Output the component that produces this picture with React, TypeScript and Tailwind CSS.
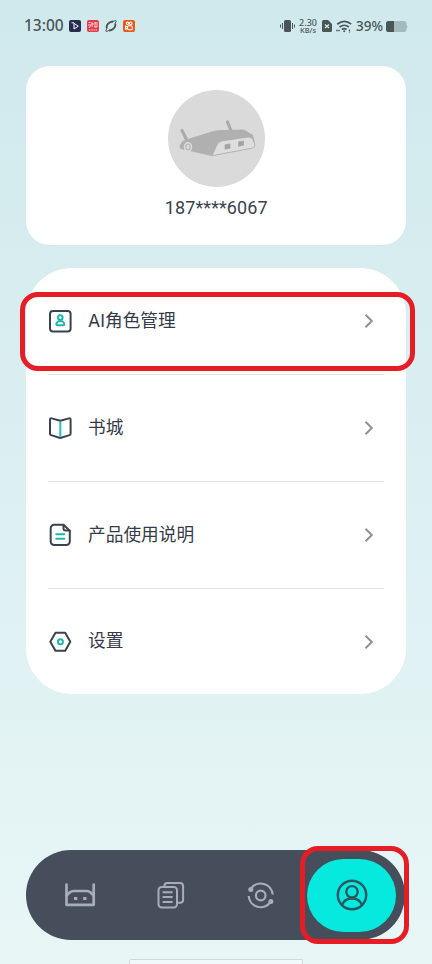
import React from 'react';

const RoleIcon = () => (
  <svg width="24" height="24" viewBox="0 0 24 24" fill="none" strokeWidth="2">
    <rect x="2" y="1.9" width="20.6" height="20.6" rx="3" stroke="#3b424f" />
    <circle cx="12.3" cy="8.6" r="2.3" stroke="#20b5ac" />
    <path d="M10.3 12.300h4c1.300.9 2 1.900 2 3 0 .8-.4 1-1 1H9.300c-.6 0-1-.2-1-1 0-1.100.7-2.100 2-3z" stroke="#20b5ac" strokeLinejoin="round" />
  </svg>
);

const BookIcon = () => (
  <svg width="24" height="24" viewBox="0 0 24 24" fill="none" strokeWidth="2" strokeLinejoin="round">
    <path d="M12.300 4.800 3.700 2.400Q2 2 2 3.500v14.300q0 1 1 1.300l9.300 2.900 9.300-2.900q1-.3 1-1.300V3.500Q22.600 2 20.900 2.400z" stroke="#3b424f" />
    <path d="M12.300 5.800v15" stroke="#20c4ba" />
  </svg>
);

const ManualIcon = () => (
  <svg width="24" height="24" viewBox="0 0 24 24" fill="none" strokeWidth="2" strokeLinecap="round" strokeLinejoin="round">
    <path d="M15.500 1.800H6.200a3.500 3.500 0 0 0-3.500 3.500v13.200A3.500 3.500 0 0 0 6.200 22h12.100a3.500 3.500 0 0 0 3.500-3.500V7.800z" stroke="#3b424f" />
    <path d="M15.500 2v3.500q0 2 2 2h4" stroke="#3b424f" />
    <path d="M8.300 11.200h8M8.300 15.800h8" stroke="#20b5ac" />
  </svg>
);

const SettingsIcon = () => (
  <svg width="24" height="24" viewBox="0 0 24 24" fill="none" strokeWidth="2">
    <path d="M7.500 2.700h9.700L22.300 11.800l-5.100 9H7.500l-5.200-9z" stroke="#3b424f" strokeLinejoin="round" />
    <circle cx="12.400" cy="11.800" r="2.500" stroke="#20b5ac" />
  </svg>
);

const Chevron = () => (
  <svg width="10" height="16" viewBox="0 0 10 16" fill="none" stroke="#929292" strokeWidth="2">
    <path d="m1.500 1.700 6.300 6.300-6.300 6.300" />
  </svg>
);

const RouterAvatar = () => (
  <svg width="97" height="97" viewBox="0 0 97 97">
    <circle cx="48.500" cy="48.500" r="48.500" fill="#dadada" />
    <path d="m14 40.500 4.500 9M59.500 32l3.700 9" stroke="#ababab" strokeWidth="3.200" strokeLinecap="round" />
    <path d="M11.500 57.500q0-4.500 5-7.500L44 41.500q3-1 6-1.200l24-.8q2 0 3.500 1L85 45l2 8-3 5-40 8-29-6.500q-3-.5-3.500-2z" fill="#b0b0b0" />
    <path d="m44 65.700 4.800-10.500q1.500-3.700 6-4.500L80 47q3.500-.4 4.800 2.500l2 4.500q.7 3.300-3.200 4.300z" fill="#dedede" stroke="#ababab" strokeWidth=".8" strokeLinejoin="round" />
    <path d="m57 54.800 5-.9v4.300l-5 1zM70.500 51.900l5-.9v4.300l-5 1z" fill="#a3a3a3" stroke="#a3a3a3" strokeWidth=".7" strokeLinejoin="round" />
    <ellipse cx="20" cy="57" rx="4.200" ry="5" fill="#dcdcdc" />
    <ellipse cx="20" cy="57" rx="2.200" ry="3" fill="none" stroke="#a6a6a6" strokeWidth=".9" />
  </svg>
);

const menu = [
  { label: 'AI角色管理', Icon: RoleIcon },
  { label: '书城', Icon: BookIcon },
  { label: '产品使用说明', Icon: ManualIcon },
  { label: '设置', Icon: SettingsIcon },
];

const StatusBar = () => (
  <header className="flex h-[52px] items-center justify-between pr-6 pl-6 text-[#4a5557]">
    <div className="flex items-center">
      <span className="w-[45px] font-['Noto_Sans'] text-[15.500px] leading-none font-medium whitespace-nowrap">13:00</span>
      <div className="flex gap-[6px]">
        <svg width="12" height="12" viewBox="0 0 12 12">
          <rect width="12" height="12" rx="2" fill="#262b4f" />
          <path d="M5 9V3.300l4.300 2.900L5 9M2.500 2.800H5" fill="none" stroke="#fff" />
        </svg>
        <svg width="12" height="12" viewBox="0 0 12 12">
          <rect width="12" height="12" rx="2" fill="#e43c49" />
          <path d="M1.500 2.500h2M1 5h3l-2 3M5 2v5M4.500 4H7M8 2v5M7.500 3H11M10 4v3H7" fill="none" stroke="#ffe3e3" strokeWidth=".9" />
          <path d="M2 10h8" stroke="#ffd5d5" strokeDasharray="1.500 .7" />
        </svg>
        <svg width="12" height="12" viewBox="0 0 12 12" fill="none" stroke="#4a5557">
          <path d="M2 8.500C.5 5.500 4 1.500 8 1.500M10 3.500C11.500 6.500 8 10.500 4 10.500" strokeWidth="1.800" />
          <path d="M2 8.500Q0 11 1 11.300q1.500.2 4-1.300M10 3.500Q12 1 11 .7 9.500.5 7 2" />
        </svg>
        <svg width="12" height="12" viewBox="0 0 12 12" fill="none" stroke="#fff" strokeWidth="1.100">
          <rect width="12" height="12" rx="2" fill="#ed5717" stroke="none" />
          <circle cx="4.500" cy="3.300" r="1.200" />
          <circle cx="7.700" cy="3.300" r="1.300" />
          <rect x="4.600" y="5.700" width="4.600" height="4" rx="1" />
          <path d="m4.600 7.200-2-1v3l2-1" />
        </svg>
      </div>
    </div>
    <div className="flex items-center">
      <svg width="15" height="14" viewBox="0 0 15 14" fill="#4a5557">
        <rect x="4" y="1" width="7" height="12" rx="1.500" />
        <path d="M2 4h1v6H2zM0 5.500h1v3H0zM12 4h1v6h-1zM14 5.500h1v3h-1z" />
      </svg>
      <div className="ml-[3px] flex w-5 flex-col items-center font-['Noto_Sans'] font-medium whitespace-nowrap">
        <span className="text-[9px] leading-[8px]">2.30</span>
        <span className="text-[7.500px] leading-[7px]">KB/s</span>
      </div>
      <svg className="ml-[4px]" width="10" height="12" viewBox="0 0 10 12">
        <path d="M0 1.500Q0 0 1.500 0H6l4 4v6.500q0 1.500-1.500 1.500h-7Q0 12 0 10.500z" fill="#4a5557" />
        <path d="m3 4.500 4 3.500M7 4.500 3 8" stroke="#d5ecef" strokeWidth="1.200" />
      </svg>
      <svg className="ml-[4px]" width="16" height="13" viewBox="0 0 16 13" fill="none" stroke="#4a5557" strokeWidth="1.700">
        <path d="M1.200 4.200q7.300-5.500 14 0M3.500 7q4.700-3.500 9.400 0M5.800 9.500q2.400-1.700 4.800 0" />
        <circle cx="8.200" cy="11.300" r="1" fill="#4a5557" stroke="none" />
        <path d="M.2 10.500h4M13.500 9.500v3" strokeWidth="1.300" strokeDasharray="1.500 .5" />
      </svg>
      <span className="ml-[4px] w-[28px] pt-[2px] font-['Noto_Sans'] text-[13.500px] leading-none font-medium whitespace-nowrap">39%</span>
      <svg className="ml-[2px]" width="22" height="11" viewBox="0 0 22 11">
        <path d="M2.500 0H18q2.500 0 2.500 2.500V4q1 0 1 1.500t-1 1.500v1.500Q20.500 11 18 11H2.500Q0 11 0 8.500v-6Q0 0 2.500 0z" fill="#a3bbbd" />
        <path d="M2.500 0H8v11H2.500Q0 11 0 8.500v-6Q0 0 2.500 0z" fill="#4a5557" />
      </svg>
    </div>
  </header>
);

const BottomNav = () => (
  <nav className="relative mx-[26px] mt-[156px] flex h-[90px] w-[379px] items-center rounded-full bg-[#474e5b] text-[#a8adb9]">
    <div className="flex w-[281px] items-center pl-[38px]">
      <svg width="32" height="26" viewBox="0 0 32 26" fill="none" stroke="currentColor" strokeWidth="2.700" strokeLinecap="round" strokeLinejoin="round">
        <path d="M2.500 2.500v20.300h27.200V2.500" />
        <path d="M2.500 13.500 6 10.300Q7.300 9 9.500 9H23q2 0 3.200 1.300l3.500 3.200" />
        <path d="M10 16.500h3.300M19.200 16.500h3.300" strokeWidth="3.200" strokeLinecap="butt" />
      </svg>
      <svg className="ml-[61px]" width="28" height="28" viewBox="0 0 28 28" fill="none" stroke="currentColor" strokeWidth="2">
        <rect x="1.500" y="6" width="18.500" height="20.500" rx="3.200" />
        <path d="M7.400 6V5q0-3 3-3h12.400q3.300 0 3.300 3.300v13.500q0 3-3 3h-3M5.600 11.200h10M5.600 16h10M5.600 21h10" />
      </svg>
      <svg className="ml-[62px]" width="28" height="28" viewBox="0 0 28 28" fill="none" stroke="currentColor" strokeWidth="2.200">
        <circle cx="13.700" cy="14.500" r="4.800" />
        <path d="M4 7.500A12 12 0 0 1 25.700 13.500M23.500 21A12 12 0 0 1 1.700 15" />
        <circle cx="3.800" cy="8.500" r="2.500" fill="currentColor" stroke="none" />
        <circle cx="23.900" cy="20.500" r="2.500" fill="currentColor" stroke="none" />
      </svg>
    </div>
    <div className="flex h-[73px] w-[89px] items-center justify-center rounded-full bg-[#05e9df]">
      <svg width="32" height="32" viewBox="0 0 32 32" fill="none" stroke="#2e5660" strokeWidth="2.400">
        <circle cx="16" cy="16" r="14.200" />
        <circle cx="16" cy="12.800" r="5.700" />
        <path d="M6 26c1.500-4 5-6.500 10-6.500S24.500 22 26 26" />
      </svg>
    </div>
    <div className="absolute -top-[4px] left-[274px] h-[98px] w-[109px] rounded-[18px] border-[5px] border-[#e71d25]" />
  </nav>
);

export default function App() {
  return (
    <main className="flex h-[964px] w-[432px] flex-col overflow-hidden bg-linear-to-b from-[#d0e9ed] to-[#e8f6f6] font-['Noto_Sans_CJK_SC',sans-serif]">
      <StatusBar />

      <section className="mx-[26px] mt-[14px] flex h-[179px] w-[379.500px] flex-col items-center rounded-[24px] bg-white pt-6 pl-px">
        <RouterAvatar />
        <p className="mt-[9px] font-['Roboto'] text-[18px] leading-6 tracking-[0.100px] text-[#3b424f]">187****6067</p>
      </section>

      <section className="relative mx-[26px] mt-[23px] h-[426px] w-[379.500px] rounded-[46px] bg-white px-[22px]">
        {menu.map(({ label, Icon }) => (
          <div key={label} className="flex h-[107px] items-center border-b border-[#e3e3e5] pr-[10px] last-of-type:h-[105px] last-of-type:border-0">
            <Icon />
            <span className="ml-4 flex-1 pb-px font-['Inter','Noto_Sans_CJK_SC',sans-serif] text-[17.700px] leading-6 text-[#353b48]">{label}</span>
            <Chevron />
          </div>
        ))}
        {/* Highlight around the first entry */}
        <aside className="absolute top-6 -left-[6px] h-[79px] w-[395px] rounded-[18px] border-[5px] border-[#e71d25]" />
      </section>

      <BottomNav />
      <div className="mx-auto mt-[19px] h-[5px] w-[174px] shrink-0 rounded-t-[2px] border border-b-0 border-[#cbdadc] bg-[#f1fafa]" />
    </main>
  );
}
